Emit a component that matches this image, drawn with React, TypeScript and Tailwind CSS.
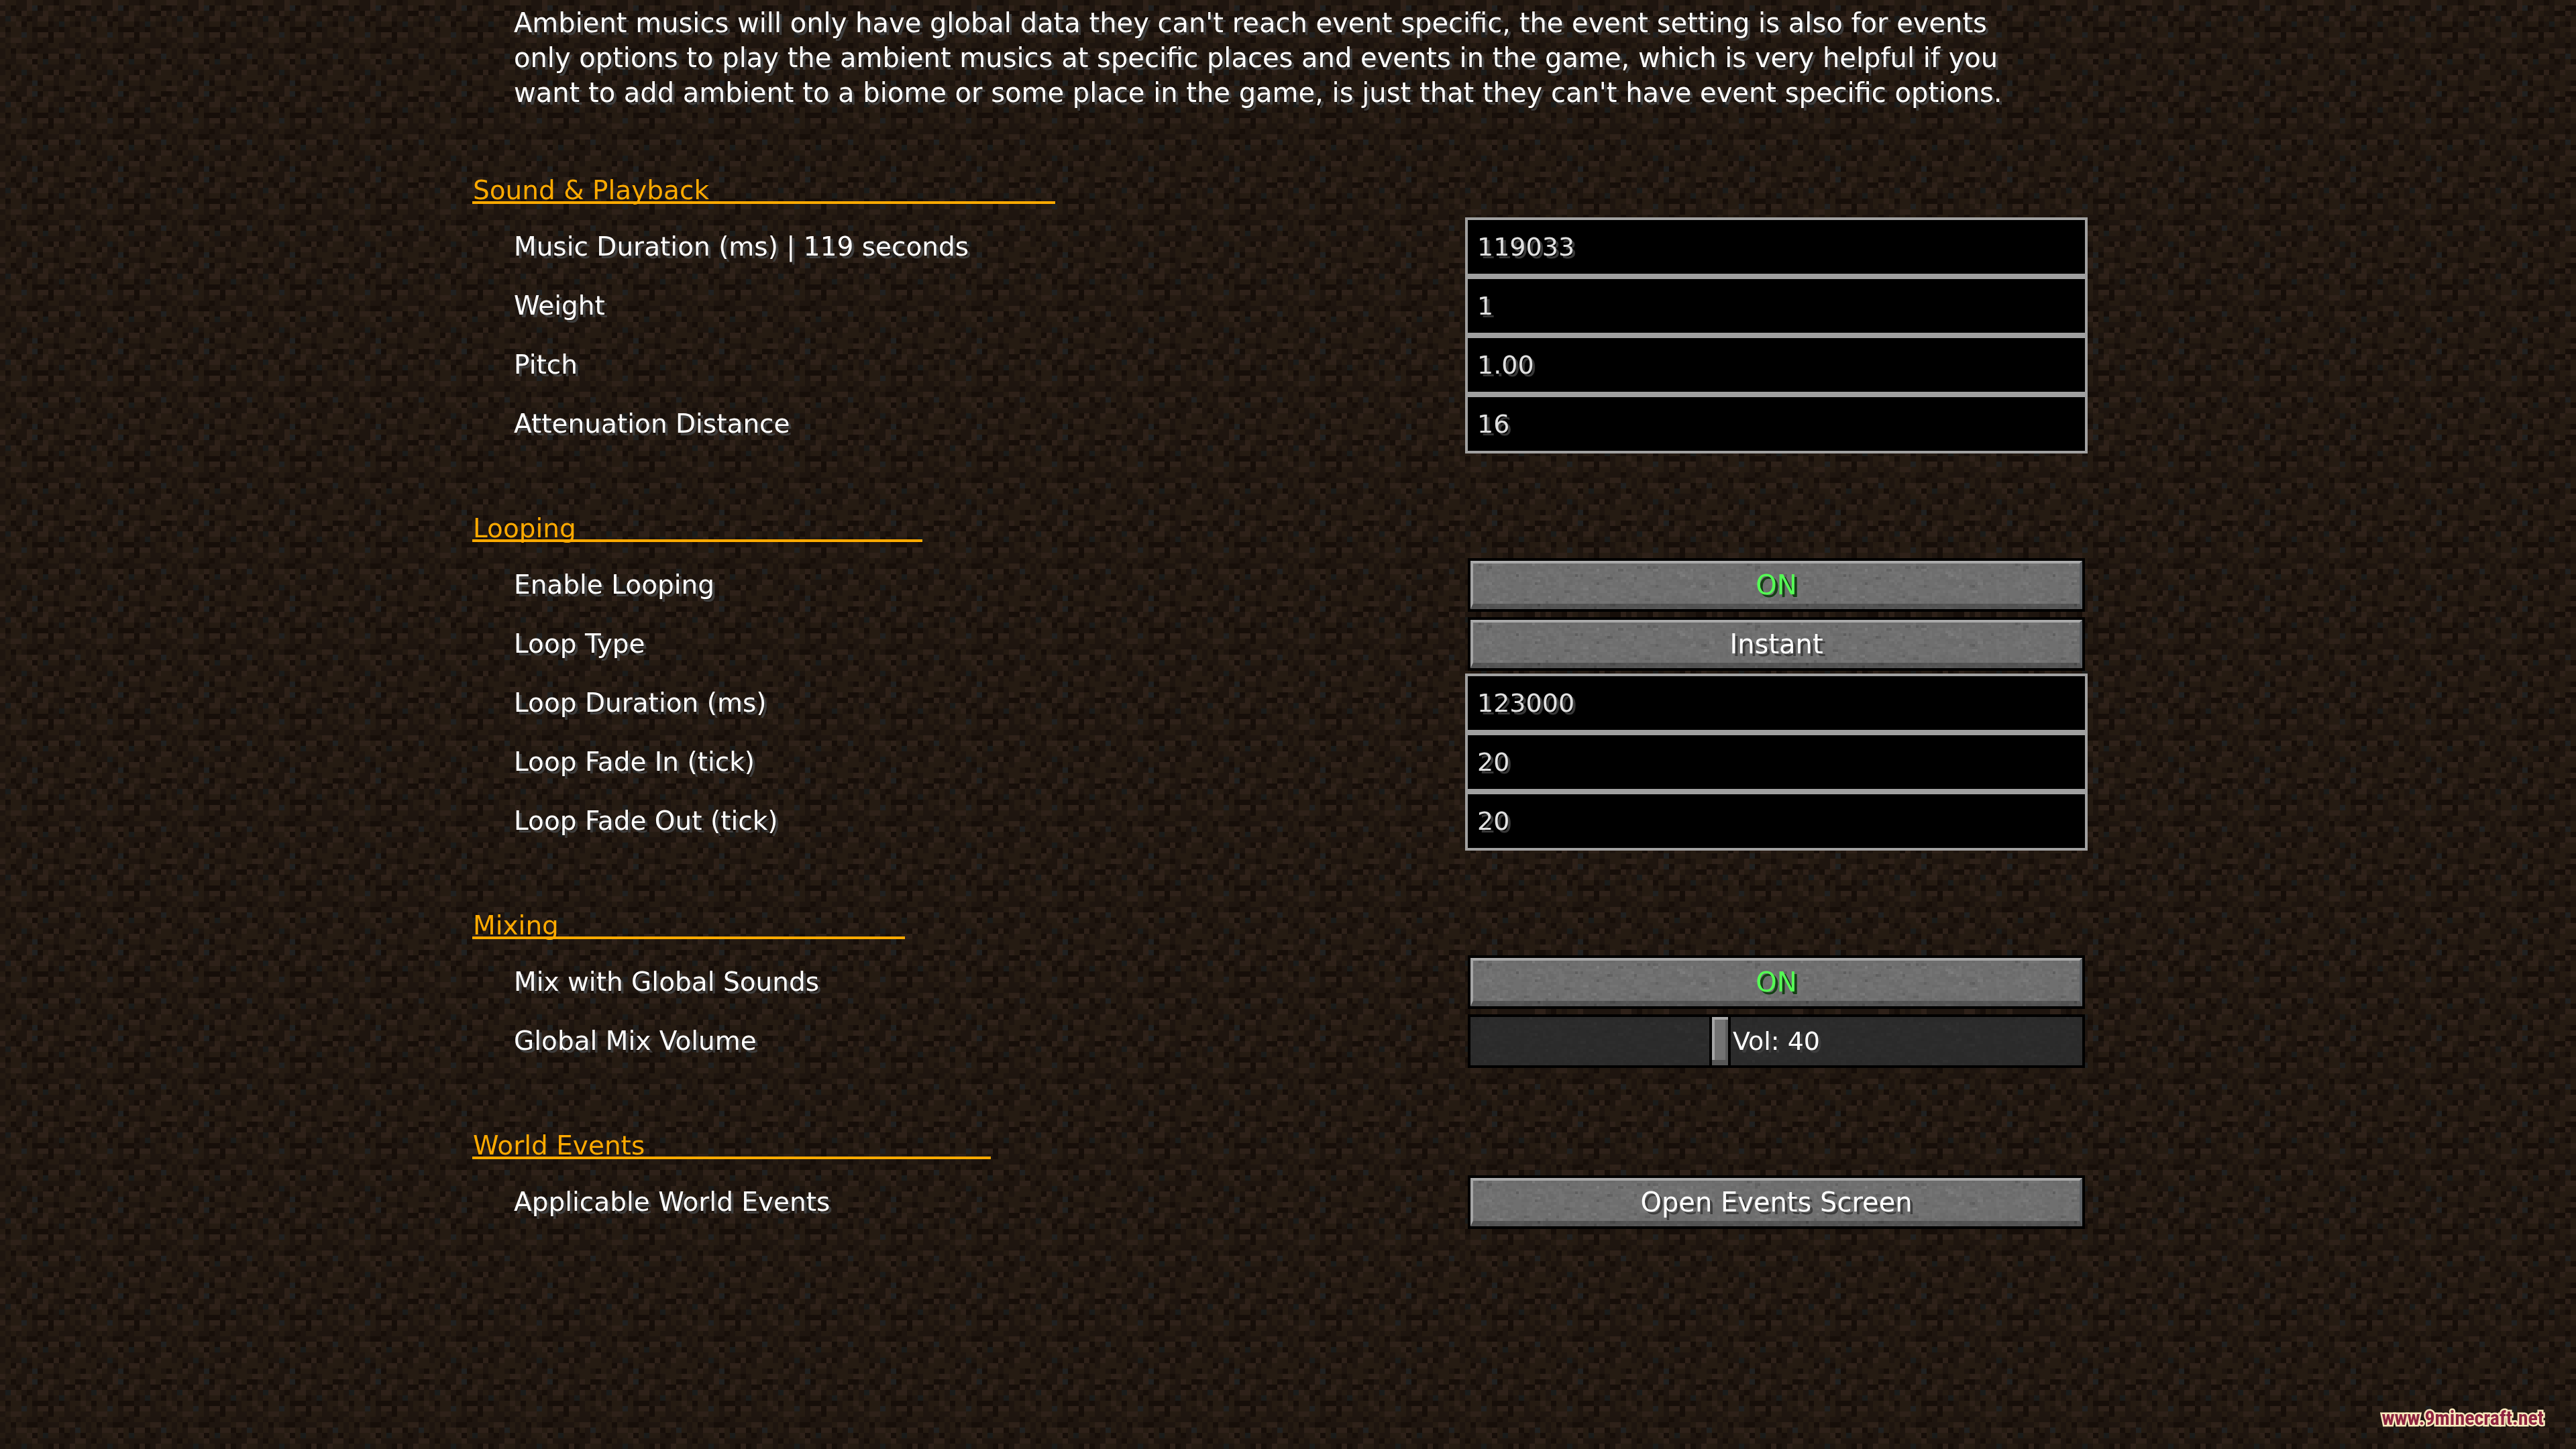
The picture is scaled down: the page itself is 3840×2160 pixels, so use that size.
import { useState } from 'react';
import type { ReactNode } from 'react';

// 16x16 dirt texture, one letter per texel
const DIRT = [
    'cbbaacbbaadabbbc',
    'abdaacgdbcbacbdd',
    'caadcbaacbaaddca',
    'ancbadaccabacbab',
    'abbcdbabbdanbadb',
    'bdbbabdddaadabbc',
    'cabbgbaccdccabab',
    'abccbbabadbbaaba',
    'bababaadabbaaada',
    'abdbaddaaaabccab',
    'abaccbcbdccdbagb',
    'baabbcdbnbbadabd',
    'adbabbcaaaaaaacc',
    'abaanabbadcdacbb',
    'bbdcadbaccababbb',
    'bacbaagdbbabbbad',
];

const DIRT_COLORS: Record<string, string> = {
    a: '#1e150f',
    b: '#251b12',
    c: '#2e2119',
    d: '#160e09',
    g: '#202121',
    n: '#1a1c1b',
};

const STONE_SHADES = [
    { color: '#000', opacity: 0.12 },
    { color: '#000', opacity: 0.04 },
    { color: '#fff', opacity: 0.03 },
    { color: '#fff', opacity: 0.08 },
];

function random(seed: number) {
    return () => {
        seed = (seed + 0x6d2b79f5) | 0;
        let t = Math.imul(seed ^ (seed >>> 15), 1 | seed);
        t = (t + Math.imul(t ^ (t >>> 7), 61 | t)) ^ t;
        return ((t ^ (t >>> 14)) >>> 0) / 4294967296;
    };
}

// Speckles for the stone buttons, 4px texels on a 400x72 tile
const stonePaths = (() => {
    const paths = ['', '', '', ''];
    const next = random(11);
    for (let y = 0; y < 72; y += 4) {
        for (let x = 0; x < 400; x += 4) {
            const n = next();
            const w = next() > 0.5 ? 8 : 4;
            const cell = `M${x} ${y}h${w}v4h-${w}z`;
            if (n < 0.015) paths[0] += cell;
            else if (n < 0.2) paths[1] += cell;
            else if (n > 0.985) paths[3] += cell;
            else if (n > 0.8) paths[2] += cell;
        }
    }
    return paths;
})();

function Background() {
    return (
        <svg className="fixed inset-0 -z-10 h-full w-full" shapeRendering="crispEdges" aria-hidden="true">
            <defs>
                <pattern id="dirt" width="128" height="128" patternUnits="userSpaceOnUse">
                    {DIRT.map((row, y) =>
                        row.split('').map((t, x) => (
                            <rect key={`${x}-${y}`} x={x * 8} y={y * 8} width="8" height="8" fill={DIRT_COLORS[t]} />
                        ))
                    )}
                </pattern>
                <pattern id="stone" width="400" height="72" patternUnits="userSpaceOnUse">
                    {STONE_SHADES.map((shade, i) => (
                        <path key={i} d={stonePaths[i]} fill={shade.color} fillOpacity={shade.opacity} />
                    ))}
                </pattern>
            </defs>
            <rect width="100%" height="100%" fill="url(#dirt)" />
        </svg>
    );
}

function Stone({ faint }: { faint?: boolean }) {
    return (
        <svg
            className={`pointer-events-none absolute inset-0 h-full w-full ${faint ? 'opacity-30' : ''}`}
            shapeRendering="crispEdges"
            aria-hidden="true"
        >
            <rect width="100%" height="100%" fill="url(#stone)" />
        </svg>
    );
}

function Section({ title, children }: { title: string; children: ReactNode }) {
    return (
        <section className="mb-24">
            <h2 className="mb-5 h-9 w-fit border-b-4 border-[#ffaa00] pr-[516px] pl-px leading-8 whitespace-nowrap text-[#ffaa00]">
                {title}
            </h2>
            <div>{children}</div>
        </section>
    );
}

function Row({ id, label, children }: { id: string; label: string; children: ReactNode }) {
    return (
        <div className="flex h-[88px] items-center justify-between">
            <label htmlFor={id} className="pl-[62px] text-white [text-shadow:4px_4px_0_#3e3e3e]">
                {label}
            </label>
            <div className="w-[928px]">{children}</div>
        </div>
    );
}

function TextRow({ id, label, value }: { id: string; label: string; value: string }) {
    return (
        <Row id={id} label={label}>
            <input
                id={id}
                type="text"
                defaultValue={value}
                className="block h-[88px] w-full border-4 border-[#a0a0a0] bg-black px-3.5 text-[38px] text-[#e0e0e0] outline-none [text-shadow:4px_4px_0_#383838]"
            />
        </Row>
    );
}

function ButtonRow({ id, label, children, onClick }: { id: string; label: string; children: ReactNode; onClick?: () => void }) {
    return (
        <Row id={id} label={label}>
            <div className="px-1">
                <button
                    id={id}
                    type="button"
                    onClick={onClick}
                    className="relative block h-20 w-full border-4 border-black bg-[#6f6f6f] text-[40px] text-white [text-shadow:4px_4px_0_#3e3e3e]"
                >
                    <Stone />
                    <span className="absolute inset-0 border-4 border-b-8 border-t-[#aaaaaa] border-r-[#5c6064] border-b-black/25 border-l-[#a4a4a4]" />
                    <span className="relative">{children}</span>
                </button>
            </div>
        </Row>
    );
}

function Toggle({ on }: { on: boolean }) {
    return on ? (
        <span className="text-[#55ff55] [text-shadow:4px_4px_0_#153f15]">ON</span>
    ) : (
        <span className="text-[#ff5555] [text-shadow:4px_4px_0_#3f1515]">OFF</span>
    );
}

const LOOP_TYPES = ['Instant', 'Fade'];

export default function App() {
    const [looping, setLooping] = useState(true);
    const [loopType, setLoopType] = useState(0);
    const [mix, setMix] = useState(true);
    const [volume, setVolume] = useState(40.5);

    return (
        <div className="relative isolate min-h-screen overflow-hidden pt-2 pr-[728px] pl-[704px] font-['DejaVu_Sans',sans-serif] text-[39px]">
            <Background />

            <p className="mb-[104px] pl-[62px] text-[40px] leading-[52px] whitespace-nowrap text-white [text-shadow:4px_4px_0_#3e3e3e]">
                Ambient musics will only have global data they can't reach event specific, the event setting is also for events
                <br />
                only options to play the ambient musics at specific places and events in the game, which is very helpful if you
                <br />
                want to add ambient to a biome or some place in the game, is just that they can't have event specific options.
            </p>

            <form>
                <Section title="Sound & Playback">
                    <TextRow id="duration" label="Music Duration (ms) | 119 seconds" value="119033" />
                    <TextRow id="weight" label="Weight" value="1" />
                    <TextRow id="pitch" label="Pitch" value="1.00" />
                    <TextRow id="attenuation" label="Attenuation Distance" value="16" />
                </Section>

                <Section title="Looping">
                    <ButtonRow id="looping" label="Enable Looping" onClick={() => setLooping(!looping)}>
                        <Toggle on={looping} />
                    </ButtonRow>
                    <ButtonRow id="loop-type" label="Loop Type" onClick={() => setLoopType((loopType + 1) % LOOP_TYPES.length)}>
                        {LOOP_TYPES[loopType]}
                    </ButtonRow>
                    <TextRow id="loop-duration" label="Loop Duration (ms)" value="123000" />
                    <TextRow id="fade-in" label="Loop Fade In (tick)" value="20" />
                    <TextRow id="fade-out" label="Loop Fade Out (tick)" value="20" />
                </Section>

                <Section title="Mixing">
                    <ButtonRow id="mix" label="Mix with Global Sounds" onClick={() => setMix(!mix)}>
                        <Toggle on={mix} />
                    </ButtonRow>
                    <Row id="volume" label="Global Mix Volume">
                        <div className="px-1">
                            <div className="relative h-20 bg-[#2b2b2b]">
                                <Stone faint />
                                <input
                                    id="volume"
                                    type="range"
                                    min={0}
                                    max={100}
                                    step="any"
                                    value={volume}
                                    onChange={(e) => setVolume(Number(e.target.value))}
                                    className="relative block h-20 w-full appearance-none bg-transparent shadow-[inset_0_0_0_4px_#000] outline-none [&::-webkit-slider-thumb]:h-20 [&::-webkit-slider-thumb]:w-8 [&::-webkit-slider-thumb]:appearance-none [&::-webkit-slider-thumb]:border-4 [&::-webkit-slider-thumb]:border-black [&::-webkit-slider-thumb]:bg-[#737373] [&::-webkit-slider-thumb]:shadow-[inset_0_4px_0_#aaaaaa,inset_0_-8px_0_#565656,inset_4px_0_0_#a4a4a4,inset_-4px_0_0_#5c5c5c]"
                                />
                                <output
                                    htmlFor="volume"
                                    className="pointer-events-none absolute inset-0 flex items-center justify-center text-[38px] text-white [text-shadow:4px_4px_0_#3e3e3e]"
                                >
                                    Vol: {Math.floor(volume)}
                                </output>
                            </div>
                        </div>
                    </Row>
                </Section>

                <Section title="World Events">
                    <ButtonRow id="events" label="Applicable World Events">
                        Open Events Screen
                    </ButtonRow>
                </Section>
            </form>

            <a
                href="https://www.9minecraft.net"
                className="absolute right-12 bottom-7 font-['Liberation_Sans_Narrow','Roboto_Condensed','DejaVu_Sans_Condensed',sans-serif] text-[30px] leading-9 font-bold text-[#8e2340] [-webkit-text-stroke:5px_#f8e9bd] [paint-order:stroke_fill]"
            >
                www.9minecraft.net
            </a>
        </div>
    );
}
